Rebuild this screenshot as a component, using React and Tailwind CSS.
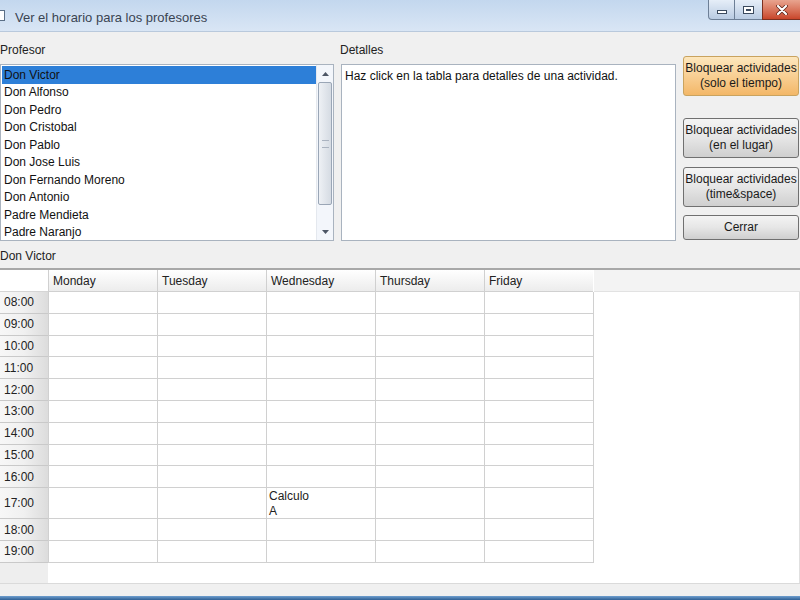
import React from 'react';

const profesores = [
  'Don Victor',
  'Don Alfonso',
  'Don Pedro',
  'Don Cristobal',
  'Don Pablo',
  'Don Jose Luis',
  'Don Fernando Moreno',
  'Don Antonio',
  'Padre Mendieta',
  'Padre Naranjo',
];

const days = ['Monday', 'Tuesday', 'Wednesday', 'Thursday', 'Friday'];
const hours = ['08:00', '09:00', '10:00', '11:00', '12:00', '13:00', '14:00', '15:00', '16:00', '17:00', '18:00', '19:00'];

const TitleBar = () => (
  <div className="h-[32px] flex items-start bg-gradient-to-b from-[#c3d7ee] to-[#d9e6f5] border-b border-[#b9c9dc] relative">
    <div className="mt-[10px] -ml-[6px] w-[11px] h-[11px] bg-white border border-[#5b6f86]" />
    <span className="ml-[10px] mt-[8px] text-[13px] text-[#3a4452]">Ver el horario para los profesores</span>
    <div className="ml-auto flex h-[20px]">
      <div className="w-[27px] h-full bg-gradient-to-b from-[#e6eef8] to-[#b9cbe2] border border-[#6d7f96] border-t-0 rounded-bl-[4px] flex items-center justify-center">
        <div className="w-[10px] h-[4px] bg-white border border-[#3b4a5e] mt-[4px]" />
      </div>
      <div className="w-[27px] h-full bg-gradient-to-b from-[#e6eef8] to-[#b9cbe2] border-b border-[#6d7f96] flex items-center justify-center">
        <div className="w-[11px] h-[8px] bg-white border border-[#3b4a5e] flex items-center justify-center">
          <div className="w-[5px] h-[2px] border border-[#3b4a5e]" />
        </div>
      </div>
      <div className="w-[38px] h-full bg-gradient-to-b from-[#e8a48f] to-[#c8452a] border border-[#7b3020] border-t-0 border-r-0 flex items-center justify-center">
        <svg width="12" height="10" viewBox="0 0 12 10">
          <path d="M2 1 L10 9 M10 1 L2 9" stroke="#5a2014" strokeWidth="3.6" strokeLinecap="round" />
          <path d="M2 1 L10 9 M10 1 L2 9" stroke="#fff" strokeWidth="2.2" strokeLinecap="round" />
        </svg>
      </div>
    </div>
  </div>
);

const ScrollBar = () => (
  <div className="w-[17px] flex flex-col bg-[#f3f6fb] border-l border-[#e4e8ee]">
    <div className="h-[17px] flex items-center justify-center">
      <svg width="7" height="4" viewBox="0 0 7 4"><path d="M0 4 L3.5 0 L7 4 Z" fill="#4d5665" /></svg>
    </div>
    <div className="h-[123px] mx-[1px] rounded-[2px] border border-[#9aa6b6] bg-gradient-to-r from-[#eef1f5] to-[#d5dbe3] flex flex-col items-center justify-center">
      <div className="h-[8px] w-[7px] border-y border-[#aab3c0]" />
    </div>
    <div className="flex-1" />
    <div className="h-[17px] flex items-center justify-center">
      <svg width="7" height="4" viewBox="0 0 7 4"><path d="M0 0 L3.5 4 L7 0 Z" fill="#4d5665" /></svg>
    </div>
  </div>
);

const Btn = ({ children, orange }) => (
  <div
    className={
      orange
        ? 'flex-1 flex flex-col items-center justify-center text-[12px] leading-[15px] text-[#1a1a1a] rounded-[3px] border border-[#c9a35f] bg-gradient-to-b from-[#fde7bd] to-[#f3b767]'
        : 'flex-1 flex flex-col items-center justify-center text-[12px] leading-[15px] text-[#1a1a1a] rounded-[3px] border border-[#707070] bg-gradient-to-b from-[#f4f4f4] via-[#e6e6e6] to-[#cfcfcf]'
    }
  >
    {children}
  </div>
);

const Schedule = () => (
  <div className="mt-[4px] h-[315px] border-t-2 border-[#a8a8a8] bg-white flex">
    <div className="flex flex-col">
      <div className="flex h-[22px]">
        <div className="w-[48px] bg-white border-b border-[#d5d5d5]" />
        {days.map((d) => (
          <div key={d} className="w-[109px] px-[4px] flex items-center bg-gradient-to-b from-white to-[#ececec] border-l border-b border-[#d0d0d0] text-[12px] text-[#222]">
            {d}
          </div>
        ))}
      </div>
      {hours.map((h) => (
        <div key={h} className={h === '17:00' ? 'flex h-[31px]' : 'flex h-[21.8px]'}>
          <div className="w-[48px] px-[4px] flex items-center bg-gradient-to-r from-[#f7f7f7] via-[#f0f0f0] to-[#dcdcdc] border-b border-[#c9c9c9] text-[12px] text-[#222]">
            {h}
          </div>
          {days.map((d) => (
            <div key={d} className="w-[109px] border-l border-b border-[#d0d0d0] text-[12px] leading-[15px] text-[#222] px-[2px] pt-[1px]">
              {h === '17:00' && d === 'Wednesday' ? (
                <>
                  <div>Calculo</div>
                  <div>A</div>
                </>
              ) : null}
            </div>
          ))}
          <div className="border-l border-[#d0d0d0]" />
        </div>
      ))}
      <div className="flex-1 flex">
        <div className="w-[48px] bg-[#eeeeee]" />
      </div>
    </div>
    <div className="flex-1 flex flex-col">
      <div className="h-[22px] bg-[#f3f3f3] border-b border-[#e2e2e2]" />
      <div className="flex-1 border-r border-[#e0e0e0]" />
    </div>
  </div>
);

export default function App() {
  return (
    <div className="w-[800px] h-[600px] bg-[#f0f0f0] flex flex-col overflow-hidden" style={{ fontFamily: '"Liberation Sans", Arial, sans-serif' }}>
      <TitleBar />
      <div className="flex-1 flex flex-col">
        <div className="flex">
          <div className="w-[334px] flex flex-col pt-[10px]">
            <div className="h-[16px] text-[12px] leading-[16px] text-[#222]">Profesor</div>
            <div className="mt-[6px] h-[177px] bg-white border border-[#a9b3bf] flex">
              <div className="flex-1 pt-[1px] pl-[1px]">
                {profesores.map((p, i) => (
                  <div
                    key={p}
                    className={
                      i === 0
                        ? 'h-[17.5px] pl-[2px] flex items-center text-[12px] text-[#111] bg-[#2d7fd8]'
                        : 'h-[17.5px] pl-[2px] flex items-center text-[12px] text-[#111]'
                    }
                  >
                    {p}
                  </div>
                ))}
              </div>
              <ScrollBar />
            </div>
          </div>
          <div className="ml-[6px] w-[336px] flex flex-col pt-[10px]">
            <div className="h-[16px] text-[12px] leading-[16px] text-[#222]">Detalles</div>
            <div className="mt-[6px] ml-[1px] h-[177px] bg-white border border-[#a9b3bf] px-[3px] pt-[2px] text-[12px] text-[#111]">
              Haz click en la tabla para detalles de una actividad.
            </div>
          </div>
          <div className="ml-[7px] w-[116px] flex flex-col pt-[24px]">
            <div className="h-[40px] flex flex-col"><Btn orange><span>Bloquear actividades</span><span>(solo el tiempo)</span></Btn></div>
            <div className="mt-[22px] h-[40px] flex flex-col"><Btn><span>Bloquear actividades</span><span>(en el lugar)</span></Btn></div>
            <div className="mt-[9px] h-[40px] flex flex-col"><Btn><span>Bloquear actividades</span><span>(time&amp;space)</span></Btn></div>
            <div className="mt-[8px] h-[25px] flex flex-col"><Btn><span>Cerrar</span></Btn></div>
          </div>
        </div>
        <div className="mt-[7px] h-[16px] text-[12px] leading-[16px] text-[#222]">Don Victor</div>
        <Schedule />
        <div className="flex-1 border-t border-[#dadada]" />
        <div className="h-[4px] bg-gradient-to-b from-[#6f9fcf] to-[#2f5f94]" />
      </div>
    </div>
  );
}
